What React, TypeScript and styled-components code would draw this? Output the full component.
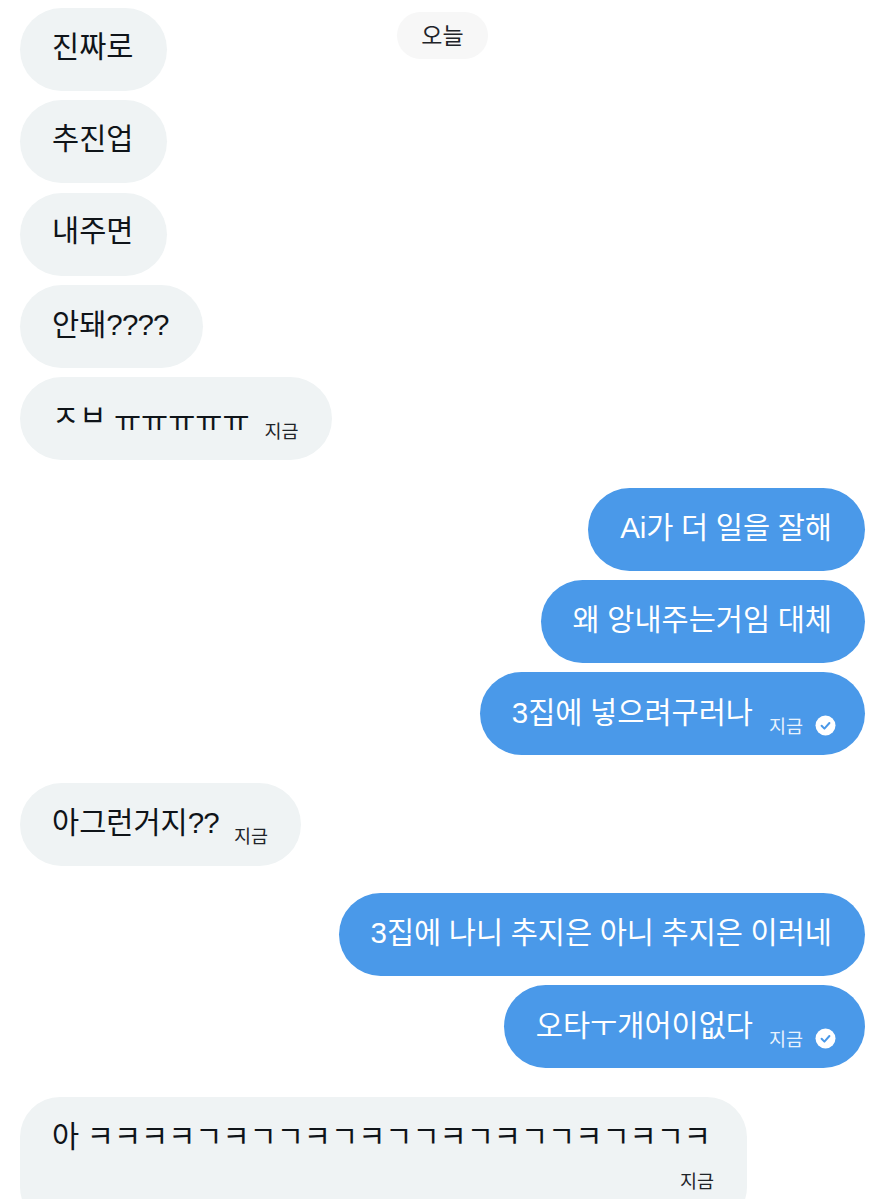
import React from 'react';
import styled, { createGlobalStyle } from 'styled-components';

const GlobalStyle = createGlobalStyle`
  html, body {
    margin: 0;
    padding: 0;
    background: #ffffff;
  }
  body {
    font-family: 'Liberation Sans', 'Noto Sans CJK KR', sans-serif;
  }
`;

const Page = styled.div`
  position: relative;
  width: 886px;
  height: 1199px;
  overflow: hidden;
  background: #ffffff;
`;

const Thread = styled.div`
  display: flex;
  flex-direction: column;
  gap: 27.4px;
  padding: 8px 21px 0 20px;
`;

const Group = styled.div<{ $sent?: boolean }>`
  display: flex;
  flex-direction: column;
  align-items: ${p => (p.$sent ? 'flex-end' : 'flex-start')};
  gap: 9.3px;
`;

const LastGroup = styled(Group)`
  margin-top: 1px;
`;

const Bubble = styled.div<{ $sent?: boolean; $timed?: boolean }>`
  display: flex;
  align-items: center;
  box-sizing: border-box;
  height: 83px;
  padding: 0 ${p => (p.$sent ? (p.$timed ? '29px' : '33px') : p.$timed ? '33px' : '34px')} 0 32px;
  border-radius: 41.5px;
  background: ${p => (p.$sent ? '#4a99e9' : '#eff3f4')};
  color: ${p => (p.$sent ? '#ffffff' : '#0f1419')};
`;

const WideBubble = styled(Bubble)`
  flex-direction: column;
  align-items: stretch;
  width: 727px;
  height: 130px;
  padding: 21px 33px 0 32px;
  border-radius: 40px;
`;

const Message = styled.span<{ $raised?: boolean }>`
  font-size: 29.5px;
  line-height: 40px;
  word-spacing: -0.6px;
  white-space: nowrap;
  position: relative;
  top: ${p => (p.$raised ? '-3px' : '-1px')};
`;

const Punct = styled.span`
  letter-spacing: -0.8px;
`;

const LowJamo = styled.span`
  position: relative;
  top: 5px;
`;

const Meta = styled.span<{ $sent?: boolean }>`
  display: flex;
  align-items: center;
  gap: 12px;
  margin-left: ${p => (p.$sent ? '16px' : '15px')};
  margin-top: 26px;
  color: ${p => (p.$sent ? '#e9f3fd' : '#1f2429')};
  font-size: 18.5px;
  line-height: 24px;
  white-space: nowrap;
`;

const WideMeta = styled(Meta)`
  justify-content: flex-end;
  margin: 12px 0 0;
`;

const DayPill = styled.div`
  position: absolute;
  top: 12px;
  left: 397px;
  display: flex;
  align-items: center;
  justify-content: center;
  box-sizing: border-box;
  width: 91px;
  height: 47px;
  padding-bottom: 4px;
  border-radius: 23.5px;
  background: #f7f7f7;
  color: #1f2429;
  font-size: 23px;
`;

const ReadIcon = styled.svg`
  display: block;
  width: 21px;
  height: 21px;
  margin-top: -2px;
`;

const Read = () => (
  <ReadIcon viewBox="0 0 21 21">
    <circle cx="10.5" cy="10.5" r="10" fill="#ffffff" />
    <path
      d="M6.6 10.8l2.8 2.8 5-5.6"
      fill="none"
      stroke="#4a99e9"
      strokeWidth="2"
      strokeLinecap="round"
      strokeLinejoin="round"
    />
  </ReadIcon>
);

const App: React.FC = () => {
  return (
    <Page>
      <GlobalStyle />
      <DayPill>오늘</DayPill>
      <Thread>
        <Group>
          <Bubble><Message $raised>진짜로</Message></Bubble>
          <Bubble><Message $raised>추진업</Message></Bubble>
          <Bubble><Message $raised>내주면</Message></Bubble>
          <Bubble><Message>안돼<Punct>????</Punct></Message></Bubble>
          <Bubble $timed>
            <Message $raised>ㅈㅂ <LowJamo>ㅠㅠㅠㅠㅠ</LowJamo></Message>
            <Meta>지금</Meta>
          </Bubble>
        </Group>
        <Group $sent>
          <Bubble $sent><Message>Ai가 더 일을 잘해</Message></Bubble>
          <Bubble $sent><Message>왜 앙내주는거임 대체</Message></Bubble>
          <Bubble $sent $timed>
            <Message>3집에 넣으려구러나</Message>
            <Meta $sent>지금 <Read /></Meta>
          </Bubble>
        </Group>
        <Group>
          <Bubble $timed>
            <Message>아그런거지<Punct>??</Punct></Message>
            <Meta>지금</Meta>
          </Bubble>
        </Group>
        <Group $sent>
          <Bubble $sent><Message>3집에 나니 추지은 아니 추지은 이러네</Message></Bubble>
          <Bubble $sent $timed>
            <Message>오타ㅜ개어이없다</Message>
            <Meta $sent>지금 <Read /></Meta>
          </Bubble>
        </Group>
        <LastGroup>
          <WideBubble>
            <Message>아 ㅋㅋㅋㅋㄱㅋㄱㄱㅋㄱㅋㄱㄱㅋㄱㅋㄱㄱㅋㄱㅋㄱㅋ</Message>
            <WideMeta>지금</WideMeta>
          </WideBubble>
        </LastGroup>
      </Thread>
    </Page>
  );
};

export default App;
